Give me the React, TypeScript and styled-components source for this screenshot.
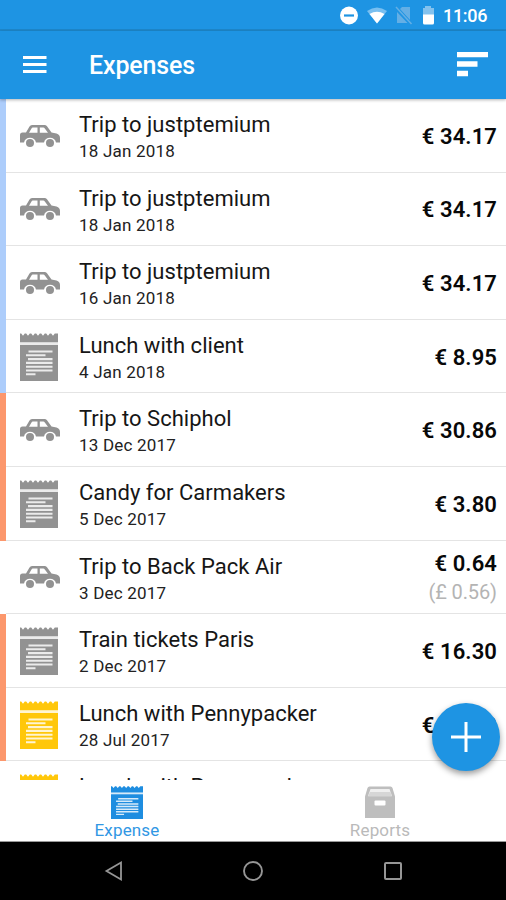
import React from 'react';
import styled, { createGlobalStyle } from 'styled-components';

const GlobalStyle = createGlobalStyle`
  * { box-sizing: border-box; }
  body { margin: 0; background: #fff; font-family: Roboto, "Liberation Sans", sans-serif; }
  svg { display: block; flex: none; }
`;

const Screen = styled.div`
  position: relative;
  width: 506px;
  height: 900px;
  overflow: hidden;
  display: flex;
  flex-direction: column;
  background: #fff;
`;

const StatusBar = styled.div`
  height: 31px;
  flex: none;
  background: #1e94e3;
  border-bottom: 2px solid #1d87cb;
  display: flex;
  justify-content: flex-end;
  align-items: center;
  padding: 3px 19px 0 0;
`;

const Clock = styled.span`
  color: #fff;
  font-size: 18px;
  line-height: 28px;
  font-weight: 500;
  width: 44px;
  margin-left: 8px;
  letter-spacing: -0.3px;
  white-space: nowrap;
`;

const AppBar = styled.header`
  height: 68px;
  flex: none;
  background: #1e94e3;
  box-shadow: 0 1px 3px rgba(0, 0, 0, 0.3);
  display: flex;
  align-items: center;
  padding: 0 18px 0 23px;
  z-index: 1;
`;

const Title = styled.h1`
  margin: 0 auto 0 42px;
  color: #fff;
  font-size: 25px;
  line-height: 30px;
  font-weight: 500;
  letter-spacing: -0.15px;
  padding-top: 2px;
`;

const List = styled.main`
  height: 681px;
  flex: none;
  overflow: hidden;
`;

const stripes = { blue: '#adcdfb', orange: '#fc976c', none: '#fff' };
type Stripe = keyof typeof stripes;

const Row = styled.div<{ $stripe: Stripe }>`
  height: 73.6px;
  display: flex;
  align-items: center;
  border-left: 6px solid ${(p) => stripes[p.$stripe]};
`;

const Separated = styled.div`
  flex: 1;
  height: 100%;
  display: flex;
  padding-right: 9px;
  border-bottom: 1.5px solid #e4e4e4;
`;

const IconCell = styled.div`
  width: 73px;
  height: 100%;
  padding: 1px 0 0 14px;
  display: flex;
  align-items: center;
`;

const Content = styled.div`
  flex: 1;
  height: 100%;
  display: flex;
  justify-content: space-between;
`;

const Name = styled.div`
  padding-top: 13px;
  font-size: 22px;
  line-height: 26px;
  letter-spacing: 0.02px;
  color: #161616;
  white-space: nowrap;
`;

const DateText = styled.div`
  font-size: 17px;
  line-height: 20px;
  margin-top: 3px;
  letter-spacing: 0.2px;
  color: #222;
`;

const Amounts = styled.div`
  display: flex;
  flex-direction: column;
  justify-content: center;
  align-items: flex-end;
  padding-top: 3px;
  white-space: nowrap;
`;

const Amount = styled.div`
  font-size: 22px;
  line-height: 28px;
  font-weight: 600;
  letter-spacing: 0.1px;
  color: #080808;
`;

const Converted = styled.div`
  font-size: 20px;
  line-height: 28px;
  letter-spacing: -0.1px;
  color: #b4b4b4;
`;

const AddButton = styled.button`
  position: absolute;
  left: 432px;
  top: 703px;
  width: 68px;
  height: 68px;
  padding: 0;
  border: 0;
  border-radius: 50%;
  background: #1e94e3;
  box-shadow: 0 3px 6px rgba(0, 0, 0, 0.4);
  display: grid;
  place-items: center;
  z-index: 2;
`;

const Tabs = styled.nav`
  height: 62px;
  flex: none;
  display: grid;
  grid-template-columns: 254px 252px;
  background: #fff;
  border-bottom: 1px solid #999;
`;

const Tab = styled.div<{ $active?: boolean }>`
  display: flex;
  flex-direction: column;
  align-items: center;
  padding-top: 6px;
  color: ${(p) => (p.$active ? '#3197e4' : '#bababa')};
  font-size: 17px;
  line-height: 20px;
  letter-spacing: 0.15px;
`;

const TabLabel = styled.span`
  margin-top: 1px;
`;

const SystemBar = styled.footer`
  height: 58px;
  flex: none;
  background: #000;
  display: flex;
  align-items: center;
  padding-left: 103px;
  gap: 119px;
`;

const CarIcon = () => (
  <svg width="40" height="24" viewBox="0 0 40 24">
    <path
      fill="#929292"
      fillRule="evenodd"
      d="M12 1H24.500Q26 1 27 2.300L31.500 8.500L36.500 9.500Q40 10.700 40 14V18.500H36A6.200 6.200 0 0 0 24 18.500H16A6.200 6.200 0 0 0 4 18.500H0V11Q0 8.500 2.500 8.500H6L9.500 2.500Q10.300 1 12 1ZM12.800 3.500Q12 3.500 11.500 4.400L9 8.700H17.500V3.500ZM19.800 3.500V8.700H28L24.800 4.400Q24.200 3.500 23.200 3.500Z"
    />
    <circle cx="10" cy="19" r="4" fill="#929292" />
    <circle cx="30" cy="19" r="4" fill="#929292" />
  </svg>
);

const ReceiptIcon = ({ color, width, height }: { color: string; width: number; height: number }) => (
  <svg width={width} height={height} viewBox="0 0 38 48" preserveAspectRatio="none">
    <path
      fill={color}
      d="M0 .5H1.200L3 2.800 4.800.5H6.200L8 2.800 9.800.5H11.200L13 2.800 14.800.5H16.200L18 2.800 19.800.5H21.200L23 2.800 24.800.5H26.200L28 2.800 29.800.5H31.200L33 2.800 34.800.5H38V9.300H0Z"
    />
    <path fill={color} fillOpacity=".18" d="M0 9.300H38V12H0Z" />
    <path fill={color} d="M0 12H38V48H0Z" />
    <path
      stroke="#fff"
      strokeOpacity=".82"
      strokeWidth="2.100"
      d="M8.500 18.500H32.500M6 22.300H25.500M8 26.100H32.500M6 29.900H32.500M6 33.700H32.500M6 37.500H32.500M6 41.300H15.500"
    />
  </svg>
);

const BoxIcon = () => (
  <svg width="32" height="33" viewBox="0 0 32 33">
    <path fill="#bebebe" d="M5.500.5H26.500Q28 .5 28.500 2L31 10.500V32H1V10.500L3.500 2Q4 .5 5.500.5Z" />
    <path fill="#efefef" d="M6.500 3H25.500L28 10H4Z" />
    <path fill="#d6d6d6" d="M6 6H26.500L28 10.500H4Z" />
    <rect x="10.500" y="14.500" width="11" height="5" rx="1" fill="#fff" />
  </svg>
);

const StatusIcons = () => (
  <svg width="96" height="22" viewBox="339 5 96 22">
    <circle cx="349" cy="15.500" r="9" fill="#fff" />
    <path d="M344 15.500h10" stroke="#1e94e3" strokeWidth="2.200" />
    <path d="M367 11q10-7 20 0L377 23.500Z" fill="#79bff0" />
    <path d="M369.500 14q7.500-4.500 15 0L377 23.500Z" fill="#fff" />
    <path d="m400 9 10 11V7h-8l-2 2M397 12v11h10.500Z" fill="#64afe5" />
    <path d="m396 7 15.500 17" stroke="#64afe5" strokeWidth="1.500" />
    <path d="M423 8h2V6h6v2h3v7h-11Z" fill="#83c2ee" />
    <path d="M423 14.500h11V23q0 1.500-1.500 1.500h-8Q423 24.500 423 23Z" fill="#fff" />
  </svg>
);

type Kind = 'car' | 'receipt' | 'yellow';
type Expense = [Stripe, Kind, string, string, string, string?];

const expenses: Expense[] = [
  ['blue', 'car', 'Trip to justptemium', '18 Jan 2018', '€ 34.17'],
  ['blue', 'car', 'Trip to justptemium', '18 Jan 2018', '€ 34.17'],
  ['blue', 'car', 'Trip to justptemium', '16 Jan 2018', '€ 34.17'],
  ['blue', 'receipt', 'Lunch with client', '4 Jan 2018', '€ 8.95'],
  ['orange', 'car', 'Trip to Schiphol', '13 Dec 2017', '€ 30.86'],
  ['orange', 'receipt', 'Candy for Carmakers', '5 Dec 2017', '€ 3.80'],
  ['none', 'car', 'Trip to Back Pack Air', '3 Dec 2017', '€ 0.64', '(£ 0.56)'],
  ['orange', 'receipt', 'Train tickets Paris', '2 Dec 2017', '€ 16.30'],
  ['orange', 'yellow', 'Lunch with Pennypacker', '28 Jul 2017', '€ 18.50'],
  ['none', 'yellow', 'Lunch with Pennypacker', '', ''],
];

export default function App() {
  return (
    <>
      <GlobalStyle />
      <Screen>
        <StatusBar>
          <StatusIcons />
          <Clock>11:06</Clock>
        </StatusBar>
        <AppBar>
          <svg width="24" height="18" viewBox="0 0 24 18">
            <path d="M0 1.500H23.500M0 8.500H23.500M0 15.500H23.500" stroke="#fff" strokeWidth="2.800" />
          </svg>
          <Title>Expenses</Title>
          <svg width="31" height="26" viewBox="0 0 31 26">
            <path d="M0 2.500H31M0 12H20.500M0 21.500H11" stroke="#fff" strokeWidth="5.300" />
          </svg>
        </AppBar>
        <List>
          {expenses.map(([stripe, kind, name, date, amount, converted], i) => (
            <Row key={i} $stripe={stripe}>
              <Separated>
                <IconCell>
                  {kind === 'car' ? (
                    <CarIcon />
                  ) : (
                    <ReceiptIcon color={kind === 'yellow' ? '#ffc70a' : '#929292'} width={38} height={48} />
                  )}
                </IconCell>
                <Content>
                  <div>
                    <Name>{name}</Name>
                    <DateText>{date}</DateText>
                  </div>
                  <Amounts>
                    <Amount>{amount}</Amount>
                    {converted && <Converted>{converted}</Converted>}
                  </Amounts>
                </Content>
              </Separated>
            </Row>
          ))}
        </List>
        <AddButton aria-label="Add expense">
          <svg width="30" height="30" viewBox="0 0 30 30">
            <path d="M15 0V30M0 15H30" stroke="#fff" strokeWidth="3" />
          </svg>
        </AddButton>
        <Tabs>
          <Tab $active>
            <ReceiptIcon color="#1e8de0" width={32} height={33} />
            <TabLabel>Expense</TabLabel>
          </Tab>
          <Tab>
            <BoxIcon />
            <TabLabel>Reports</TabLabel>
          </Tab>
        </Tabs>
        <SystemBar>
          <svg width="20" height="22" viewBox="0 0 20 22">
            <path d="M18 2.500V19.500L3.500 11Z" fill="none" stroke="#969696" strokeWidth="1.800" />
          </svg>
          <svg width="22" height="22" viewBox="0 0 22 22">
            <circle cx="11" cy="11" r="9" fill="none" stroke="#969696" strokeWidth="1.900" />
          </svg>
          <svg width="20" height="20" viewBox="0 0 20 20">
            <rect x="2" y="2" width="16" height="16" rx="1" fill="none" stroke="#969696" strokeWidth="2" />
          </svg>
        </SystemBar>
      </Screen>
    </>
  );
}
